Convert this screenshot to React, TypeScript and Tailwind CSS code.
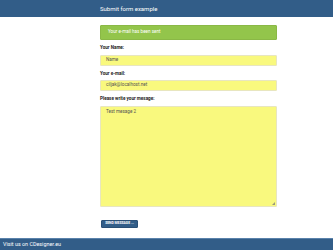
import React from "react";

export default function App() {
  const font = { fontFamily: "Roboto, 'Liberation Sans', sans-serif" };
  return (
    <div className="w-[333px] h-[250px] bg-white flex flex-col overflow-hidden" style={font}>
      <div className="h-[17px] bg-[#325d88] flex items-center pl-[100px] shrink-0">
        <span className="text-[6px] text-white leading-none">Submit form example</span>
      </div>
      <div className="flex-1 flex flex-col pl-[100px] pt-[8px]">
        <div className="w-[177px] flex flex-col">
          <div className="h-[15px] bg-[#93c54b] border border-[#8ab846] rounded-[1px] flex items-center px-[7px]">
            <span className="text-[4.6px] text-white leading-none">Your e-mail has been sent</span>
          </div>
          <div className="h-[7px] mt-[5px] flex items-center">
            <span className="text-[4.6px] font-bold text-[#222] leading-none">Your Name:</span>
          </div>
          <div className="h-[11px] mt-[3px] bg-[#f9f97e] border border-[#e8e6c0] rounded-[1px] flex items-center px-[5px]">
            <span className="text-[4.6px] text-[#555] leading-none">Name</span>
          </div>
          <div className="h-[7px] mt-[5px] flex items-center">
            <span className="text-[4.6px] font-bold text-[#222] leading-none">Your e-mail:</span>
          </div>
          <div className="h-[11px] mt-[2px] bg-[#f9f97e] border border-[#e8e6c0] rounded-[1px] flex items-center px-[5px]">
            <span className="text-[4.6px] text-[#555] leading-none">ciljak@localhost.net</span>
          </div>
          <div className="h-[7px] mt-[5px] flex items-center">
            <span className="text-[4.6px] font-bold text-[#222] leading-none">Please write your mesage:</span>
          </div>
          <div className="relative h-[101px] mt-[3px] bg-[#f9f97e] border border-[#e8e6c0] rounded-[1px] px-[5px] pt-[3px] text-[4.6px] leading-none text-[#555]">
            <div>Test mesage 2</div>
            <svg className="absolute right-[1px] bottom-[1px]" width="3" height="3" viewBox="0 0 3 3">
              <path d="M3 0 L3 3 L0 3 Z" fill="#9a9a7a" />
            </svg>
          </div>
          <div className="mt-[13px] ml-[1px] w-[37px] h-[8px] bg-[#325d88] border border-[#2a4f76] rounded-[1px] flex items-center justify-center">
            <span className="text-[3.4px] font-bold text-white leading-none uppercase">Send message ...</span>
          </div>
        </div>
      </div>
      <div className="h-[12px] bg-[#325d88] border-t border-[#5a82ab] flex items-center pl-[3px] shrink-0">
        <span className="text-[5.4px] text-white leading-none">Visit us on CDesigner.eu</span>
      </div>
    </div>
  );
}
